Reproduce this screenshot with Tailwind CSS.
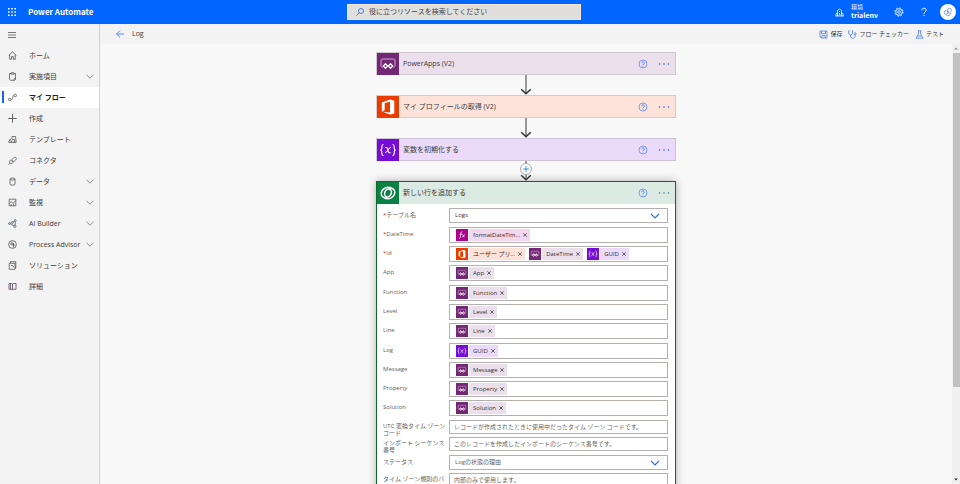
<!DOCTYPE html>
<html lang="ja">
<head>
<meta charset="utf-8">
<meta name="viewport" content="width=device-width, initial-scale=1">
<title>Power Automate - Log</title>
<script src="https://cdn.jsdelivr.net/npm/@tailwindcss/browser@4"></script>
</head>
<body class="flex h-screen flex-col overflow-hidden bg-[#f8f8f8] font-['Open_Sans','Noto_Sans_CJK_JP',sans-serif] text-[7px] leading-[10px] text-[#3b3a39]">

<svg class="hidden" aria-hidden="true">
  <symbol id="help" viewBox="0 0 10 10"><circle cx="5" cy="5" r="4" fill="none" stroke="#6f94f2" stroke-width=".9"/><path d="M3.7 4.1a1.3 1.3 0 1 1 2 1.100c-.5.3-.7.5-.7 1M5 6.900v.7" fill="none" stroke="#4f7bec" stroke-width=".9"/></symbol>
  <symbol id="dots" viewBox="0 0 12 4"><circle cx="1.500" cy="2" r=".8"/><circle cx="6" cy="2" r=".8"/><circle cx="10.500" cy="2" r=".8"/></symbol>
  <symbol id="chev" viewBox="0 0 8 5"><path d="M.5.8L4 4.200 7.500.8" fill="none" stroke="#777" stroke-width=".8"/></symbol>
  <symbol id="arrow" viewBox="0 0 12 20"><path d="M6 0v18" stroke="#979797" stroke-width="2"/><path d="M1.200 14.300L6 18.800l4.800-4.500" fill="none" stroke="#333" stroke-width="1.500"/></symbol>
  <symbol id="apps" viewBox="0 0 22 22"><rect width="22" height="22" fill="#742774"/><path d="M6.200 14H5.500a1.500 1.500 0 0 1-1.500-1.500V7.500A1.500 1.500 0 0 1 5.500 6h11A1.500 1.500 0 0 1 18 7.500v5a1.500 1.500 0 0 1-1.500 1.500h-.8" fill="none" stroke="#d9b8d9" stroke-width=".9"/><path d="M8.500 9.800l2.900 3.200-2.900 3.200L5.600 13z" fill="#fff"/><path d="M13.500 9.800l2.900 3.200-2.900 3.200-2.900-3.200z" fill="#fff"/><circle cx="8.500" cy="13" r="1" fill="#742774"/><circle cx="13.500" cy="13" r="1" fill="#742774"/></symbol>
  <symbol id="office" viewBox="0 0 22 22"><rect width="22" height="22" fill="#eb3c00"/><path d="M4.800 6.600L13 3.500l4.300 1.300v12.600L13 18.600l-8.200-3.100 8.200 1V5.800L7.700 7.100v7L4.800 15.500z" fill="#fff"/></symbol>
  <symbol id="var" viewBox="0 0 22 22"><rect width="22" height="22" fill="#770bd6"/><g fill="none" stroke="#fff" stroke-width="1.100"><path d="M6.500 5.500c-1.600 0-1.700.7-1.700 2v1.700c0 1.200-.4 1.800-1.600 1.800 1.200 0 1.600.6 1.600 1.800v1.700c0 1.300.1 2 1.700 2M15.500 5.500c1.600 0 1.700.7 1.700 2v1.700c0 1.200.4 1.800 1.600 1.800-1.200 0-1.600.6-1.600 1.800v1.700c0 1.300-.1 2-1.700 2"/><path d="M8.300 8.700c1.300-.6 2 0 2.400 1.600l.7 2.400c.4 1.200 1 1.500 2.200.8M14 8.500c-1.200-.3-1.800.6-2.900 2.400-1 1.700-1.700 3-3.100 2.600"/></g></symbol>
  <symbol id="fx" viewBox="0 0 22 22"><rect width="22" height="22" fill="#ad008c"/><path d="M12 5.200c-1.700-.8-2.500.3-2.900 2.300L8 14.500c-.4 2-1.200 2.900-2.700 2.200M6.500 9.500h4.800M11.500 10.500c1.200-.5 1.600.2 1.900 1.500l.5 2c.3 1 .8 1.200 1.700.6M16.300 10.400c-1-.2-1.500.6-2.500 2-.9 1.400-1.500 2.400-2.600 2" fill="none" stroke="#fff" stroke-width="1.300"/></symbol>
  <symbol id="dv" viewBox="0 0 22 22"><rect width="22" height="22" fill="#088142"/><g fill="none" stroke="#fff" stroke-width="1.500"><path d="M14.500 5.600C9.500 4 4.200 7.500 4.200 11.800c0 3.100 3.300 4.900 6.300 3.600"/><path d="M7.500 16.400c5 1.600 10.300-1.900 10.300-6.200 0-3.100-3.300-4.900-6.300-3.600"/><ellipse cx="11" cy="11" rx="3.200" ry="4.100" transform="rotate(25 11 11)"/></g></symbol>
</svg>

<header class="flex h-6 shrink-0 items-center bg-[#0066ff] text-white">
  <div class="flex w-[36.15%] shrink-0 items-center gap-3 pl-2">
    <button aria-label="アプリ起動ツール" class="size-2"><svg viewBox="0 0 8 8" class="size-2" fill="#fff"><path d="M0 0h1.600v1.600H0zM3.200 0h1.600v1.600H3.200zM6.400 0H8v1.600H6.400zM0 3.200h1.600v1.600H0zM3.200 3.200h1.600v1.600H3.200zM6.400 3.200H8v1.600H6.400zM0 6.400h1.600V8H0zM3.200 6.400h1.600V8H3.200zM6.400 6.400H8V8H6.400z"/></svg></button>
    <a href="#" class="font-['Noto_Sans_CJK_JP',sans-serif] text-[8px] font-bold">Power Automate</a>
  </div>
  <label class="flex h-4 w-[24.4%] shrink-0 items-center gap-[5px] border border-[#f3e3cf] bg-[#e1dfdd] pl-2">
    <svg viewBox="0 0 8 8" class="size-2 shrink-0" fill="none" stroke="#3f74d8" stroke-width=".9"><circle cx="5" cy="3" r="2.500"/><path d="M3.200 4.800L.4 7.600"/></svg>
    <input type="search" aria-label="検索" placeholder="役に立つリソースを検索してください" class="min-w-0 flex-1 bg-transparent text-[#323130] outline-none placeholder:text-[#444]">
  </label>
  <div class="flex flex-1 items-center justify-end pr-1">
    <button class="mr-4 flex items-center gap-[7px] text-left">
      <svg viewBox="0 0 9 9" class="size-[9px]" fill="none" stroke="#fff" stroke-width=".8"><path d="M.3 8h8.400M1 8V5.500h1.500M8 8V5.500H6.500M2.500 8V2.500L4.500 1l2 1.500V8M4.500 3v1M4.500 5v1M3.500 6.800h2"/></svg>
      <span class="flex flex-col"><span class="text-[6px] leading-[7px]">環境</span><span class="font-['Noto_Sans_CJK_JP',sans-serif] text-[7px] font-bold leading-[9px]">trialenv</span></span>
    </button>
    <button aria-label="設定" class="mr-4"><svg viewBox="0 0 10 10" class="size-2.5" fill="none" stroke="#fff"><circle cx="5" cy="5" r="3.300" stroke-width=".8"/><circle cx="5" cy="5" r="4.100" stroke-width=".9" stroke-dasharray="1.600 1.620"/><circle cx="5" cy="5" r="1.400" stroke-width=".8"/></svg></button>
    <button aria-label="ヘルプ" class="mr-3"><svg viewBox="0 0 8 10" class="h-2.5 w-2" fill="none" stroke="#fff" stroke-width="1"><path d="M1.800 3.300C1.800.6 6.200.6 6.200 3.200 6.200 4.800 4 4.900 4 6.700M4 7.800V9"/></svg></button>
    <button aria-label="アカウント" class="flex size-4 items-center justify-center rounded-full bg-white"><svg viewBox="0 0 10 10" class="size-2.5" fill="none" stroke="#6f8fc4" stroke-width=".8"><circle cx="3" cy="5.500" r="1.900"/><circle cx="6.500" cy="3.300" r="1.900"/><path d="M3.500 8.500c1.500.7 4-.4 4.500-2.500M4.500 5.500l1.800 1"/></svg></button>
  </div>
</header>

<div class="flex min-h-0 flex-1">
  <nav aria-label="メイン" class="w-[100px] shrink-0 border-r border-[#d2d0ce] bg-[#f3f3f3] [&_a]:flex [&_a]:h-[21px] [&_a]:items-center [&_a]:pl-2 [&_a]:pr-[5px] [&_span]:ml-3 [&_span]:flex-1 [&_span]:whitespace-nowrap [&_svg]:shrink-0">
    <button aria-label="メニュー" class="flex h-[21px] items-center pl-2"><svg viewBox="0 0 8 8" class="size-2" stroke="#666" stroke-width=".9"><path d="M0 1.500h8M0 4h8M0 6.500h8"/></svg></button>
    <a href="#"><svg viewBox="0 0 9 9" class="size-[9px]" fill="none" stroke="#555" stroke-width=".8"><path d="M.7 4.500l3.800-3.700 3.800 3.700M1.700 3.700v4.600h1.900V5.600h1.800v2.700h1.900V3.700"/></svg><span>ホーム</span></a>
    <a href="#"><svg viewBox="0 0 9 9" class="size-[9px]" fill="none" stroke="#555" stroke-width=".8"><path d="M3 1.500H1.500v5.800l.8 1h4.400l.8-.9V1.500H6M3 .8h3v1.400H3zM6 8.200V6.800h1.400"/></svg><span>実施項目</span><svg class="h-[5px] w-2"><use href="#chev"/></svg></a>
    <a href="#" aria-current="page" class="relative bg-white font-bold text-[#222]"><i class="absolute left-0.5 top-1 h-3 w-0.5 bg-[#1663f0]"></i><svg viewBox="0 0 9 9" class="size-[9px]" fill="none" stroke="#555" stroke-width=".8"><circle cx="1.800" cy="6.500" r="1.300"/><circle cx="7.200" cy="2.500" r="1.300"/><path d="M3.100 6.500h.7c.9 0 .7-.8.9-2 .1-1.100.2-2 1.200-2"/></svg><span>マイ フロー</span></a>
    <a href="#"><svg viewBox="0 0 9 9" class="size-[9px]" stroke="#555" stroke-width=".9"><path d="M4.500.3v8.400M.3 4.500h8.400"/></svg><span>作成</span></a>
    <a href="#"><svg viewBox="0 0 9 9" class="size-[9px]" fill="none" stroke="#555" stroke-width=".8"><path d="M4 4V1.500h3.500l.7 5.800H5.500M4 4.500h2.500v2.800H2.800M2.200 4.200L.6 7.300h3.200z"/></svg><span>テンプレート</span></a>
    <a href="#"><svg viewBox="0 0 9 9" class="size-[9px]" fill="none" stroke="#555" stroke-width=".8"><path d="M.5 8.500l1.400-1.400M1.900 7.100c-1-1.500-.3-2.300.7-3.200l2.500 2.500c-1 1-1.900 1.500-3.200.7zM3.800 3.600l1.600-1.600c1-.9 1.800-.9 2.500-.4.600.8.500 1.600-.4 2.600L5.800 5.800z"/></svg><span>コネクタ</span></a>
    <a href="#"><svg viewBox="0 0 9 9" class="size-[9px]" fill="none" stroke="#555" stroke-width=".8"><ellipse cx="4.500" cy="2" rx="2.500" ry="1"/><path d="M2 2v5.200c0 1.200 5 1.200 5 0V2"/></svg><span>データ</span><svg class="h-[5px] w-2"><use href="#chev"/></svg></a>
    <a href="#"><svg viewBox="0 0 9 9" class="size-[9px]" fill="none" stroke="#555" stroke-width=".8"><path d="M1.200 1.200h6.600v6.600H1.200zM1.200 5.500l2-2 1.800 2 2.800-3M3.200 6v1.800M5.500 6v1.800"/></svg><span>監視</span><svg class="h-[5px] w-2"><use href="#chev"/></svg></a>
    <a href="#"><svg viewBox="0 0 9 9" class="size-[9px]" fill="none" stroke="#4a5a70" stroke-width=".8"><circle cx="1.400" cy="4.500" r=".9"/><circle cx="7.300" cy="1.500" r=".9"/><circle cx="4.400" cy="3.500" r=".9"/><circle cx="6.800" cy="7.300" r="1.100"/><path d="M2.300 4.300l1.200-.5M5.200 3l1.400-1M2.200 5l3.600 1.800M7.200 2.400v3.800"/></svg><span>AI Builder</span><svg class="h-[5px] w-2"><use href="#chev"/></svg></a>
    <a href="#"><svg viewBox="0 0 9 9" class="size-[9px]" fill="none" stroke="#555" stroke-width=".8"><circle cx="4.500" cy="4.500" r="3.900"/><path d="M4 1.500v4M2 4h2.500M4.500 5h2.800M5.500 3v4.500"/></svg><span>Process Advisor</span><svg class="h-[5px] w-2"><use href="#chev"/></svg></a>
    <a href="#"><svg viewBox="0 0 9 9" class="size-[9px]" fill="none" stroke="#555" stroke-width=".8"><path d="M2.500 2V.7h5.300v6.500H7M1.200 2.300H7v6H1.200zM3 4.500h1.500l1.500 2"/></svg><span>ソリューション</span></a>
    <a href="#"><svg viewBox="0 0 9 9" class="size-[9px]" fill="none" stroke="#5a4565" stroke-width=".8"><path d="M1 1.500h2.600l.9.500.9-.5H8v5.800H5.400l-.9.500-.9-.5H1zM4.500 2v5.500M2.500 1.500v5.800"/></svg><span>詳細</span></a>
  </nav>

  <div class="flex min-w-0 flex-1 flex-col">
    <div class="flex h-5 shrink-0 items-center justify-between bg-[#f3f3f3] pl-4 pr-4">
      <div class="flex items-center gap-2">
        <button aria-label="戻る"><svg viewBox="0 0 8 8" class="size-2" fill="none" stroke="#5b86f5" stroke-width="1"><path d="M8 4H.8M4 .6L.6 4 4 7.400"/></svg></button>
        <h1>Log</h1>
      </div>
      <div class="flex items-center gap-1.5 text-[6px] [&_button]:flex [&_button]:items-center [&_button]:gap-0.5 [&_button]:whitespace-nowrap">
        <button><svg viewBox="0 0 9 9" class="size-[9px]" fill="none" stroke="#4a80dd" stroke-width=".8"><path d="M1 1h7v7H2L1 7zM2.500 1v2.700h4V1M2.800 8V5.700h3.500V8"/></svg>保存</button>
        <button><svg viewBox="0 0 9 9" class="size-[9px]" fill="none" stroke="#4a80dd" stroke-width=".8"><path d="M1.500.8H.6V3c0 2.500 4 2.500 4 0V.8h-.9M2.600 4.800v1.500c0 2.500 4.600 2.500 4.600 0V4.800"/><circle cx="7.200" cy="3.800" r="1"/></svg>フロー チェッカー</button>
        <button><svg viewBox="0 0 9 9" class="size-[9px]" fill="none" stroke="#4a80dd" stroke-width=".8"><path d="M2.800.8h3.400M3.500.8v3L1 8.200h7L5.500 3.800v-3M2.300 6h4.400"/></svg>テスト</button>
      </div>
    </div>

    <div class="flex min-h-0 flex-1">
      <main class="flex min-w-0 flex-1 flex-col items-center overflow-hidden pt-2 [&>*]:shrink-0">
        <section class="flex h-[23px] w-[300px] items-center border border-[#d0c8d0] bg-[#ecdfec]">
          <svg class="size-[22px]"><use href="#apps"/></svg>
          <h2 class="flex-1 pl-1">PowerApps (V2)</h2>
          <button aria-label="ヘルプ"><svg class="size-2.5"><use href="#help"/></svg></button>
          <button aria-label="メニュー" class="ml-2.5 mr-[5px]"><svg class="h-1 w-3" fill="#2563d8"><use href="#dots"/></svg></button>
        </section>
        <svg class="h-5 w-3"><use href="#arrow"/></svg>
        <section class="flex h-[23px] w-[300px] items-center border border-[#d8cac6] bg-[#fde2d9]">
          <svg class="size-[22px]"><use href="#office"/></svg>
          <h2 class="flex-1 pl-1">マイ プロフィールの取得 (V2)</h2>
          <button aria-label="ヘルプ"><svg class="size-2.5"><use href="#help"/></svg></button>
          <button aria-label="メニュー" class="ml-2.5 mr-[5px]"><svg class="h-1 w-3" fill="#2563d8"><use href="#dots"/></svg></button>
        </section>
        <svg class="h-5 w-3"><use href="#arrow"/></svg>
        <section class="flex h-[23px] w-[300px] items-center border border-[#cdc4d8] bg-[#ebdaf9]">
          <svg class="size-[22px]"><use href="#var"/></svg>
          <h2 class="flex-1 pl-1">変数を初期化する</h2>
          <button aria-label="ヘルプ"><svg class="size-2.5"><use href="#help"/></svg></button>
          <button aria-label="メニュー" class="ml-2.5 mr-[5px]"><svg class="h-1 w-3" fill="#2563d8"><use href="#dots"/></svg></button>
        </section>
        <div class="relative h-5">
          <svg class="h-5 w-3"><use href="#arrow"/></svg>
          <button aria-label="新しいステップを挿入" class="absolute left-0 top-0.5 flex size-3 items-center justify-center rounded-full border border-[#aaa] bg-white"><svg viewBox="0 0 6 6" class="size-1.5" stroke="#2b88d8" stroke-width=".9"><path d="M3 0v6M0 3h6"/></svg></button>
        </div>

        <section class="w-[300px] border border-[#0b6a24] bg-white pb-3 shadow-[0_0_8px_rgba(0,0,0,0.3)]">
          <div class="flex h-[22px] items-center bg-[#dbebe3]">
            <svg class="size-[22px]"><use href="#dv"/></svg>
            <h2 class="flex-1 pl-1">新しい行を追加する</h2>
            <button aria-label="ヘルプ"><svg class="size-2.5"><use href="#help"/></svg></button>
            <button aria-label="メニュー" class="ml-2.5 mr-[5px]"><svg class="h-1 w-3" fill="#2b7f9e"><use href="#dots"/></svg></button>
          </div>
          <form id="fields" class="flex flex-col gap-1 py-1 pl-1.5 pr-[7px] text-[6px] leading-[7px] text-[#605e5c]"></form>
        </section>
      </main>
      <div aria-hidden="true" class="flex w-2 shrink-0 flex-col items-center bg-[#f0f0f0]">
        <svg viewBox="0 0 8 9" class="h-[9px] w-2"><path d="M2.200 5.500L4 3.500l1.800 2z" fill="#888"/></svg>
        <div class="h-[76%] w-[7px] bg-[#c1c1c1]"></div>
        <svg viewBox="0 0 8 9" class="mt-auto h-[9px] w-2"><path d="M2.200 3.500L4 5.500l1.800-2z" fill="#222"/></svg>
      </div>
    </div>
  </div>
</div>

<script>
const tint = { apps: 'bg-[#ecdfec]', office: 'bg-[#fde2d9]', var: 'bg-[#ebdaf9]', fx: 'bg-[#f3d7ee]' };
const groups = [
  [
    { label: 'テーブル名', required: true, select: 'Logs', dark: true },
    { label: 'DateTime', required: true, chips: [['fx', 'formatDateTim...']] },
    { label: 'Id', required: true, chips: [['office', 'ユーザー プリ...'], ['apps', 'DateTime'], ['var', 'GUID']] },
    { label: 'App', chips: [['apps', 'App']] },
  ],
  [
    { label: 'Function', chips: [['apps', 'Function']] },
    { label: 'Level', chips: [['apps', 'Level']] },
    { label: 'Line', chips: [['apps', 'Line']] },
  ],
  [
    { label: 'Log', chips: [['var', 'GUID']] },
    { label: 'Message', chips: [['apps', 'Message']] },
    { label: 'Property', chips: [['apps', 'Property']] },
    { label: 'Solution', chips: [['apps', 'Solution']] },
  ],
  [
    { label: 'UTC 変換タイム ゾーン コード', hint: 'レコードが作成されたときに使用中だったタイム ゾーン コードです。' },
    { label: 'インポート シーケンス番号', hint: 'このレコードを作成したインポートのシーケンス番号です。' },
  ],
  [
    { label: 'ステータス', select: 'Logの状態の理由' },
    { label: 'タイム ゾーン規則のバ', hint: '内部のみで使用します。' },
  ],
];
let n = 0;
function control(f, id) {
  if (f.select) return `<div class="relative flex-1"><select id="${id}" class="block h-[15px] w-full appearance-none border border-[#b3b0ad] bg-white pl-[5px] ${f.dark ? 'text-[#323130]' : ''}"><option>${f.select}</option></select><svg viewBox="0 0 10 6" class="pointer-events-none absolute right-2 top-[5px] h-1.5 w-2.5" fill="none" stroke="#2b6de0" stroke-width="1.100"><path d="M1 1l4 4 4-4"/></svg></div>`;
  if (f.hint) return `<input id="${id}" type="text" placeholder="${f.hint}" class="h-[14px] min-w-0 flex-1 border border-[#b3b0ad] bg-white pl-1 outline-none placeholder:text-[#666]">`;
  const chips = f.chips.map(([icon, text]) => `<span class="flex h-3 shrink-0 items-center gap-px whitespace-nowrap text-[#323130]"><svg class="size-3"><use href="#${icon}"/></svg><span class="flex h-3 items-center gap-[3px] pl-1 pr-[3px] ${tint[icon]}">${text}<button type="button" aria-label="${text} を削除"><svg viewBox="0 0 4 4" class="size-1" stroke="#444" stroke-width=".8"><path d="M.3.3l3.400 3.400M3.700.3L.3 3.700"/></svg></button></span></span>`).join('');
  return `<div class="flex h-4 min-w-0 flex-1 items-center gap-1 border border-[#b3b0ad] bg-white pl-1.5">${chips}<input id="${id}" type="text" class="min-w-0 flex-1 outline-none"></div>`;
}
document.getElementById('fields').innerHTML = groups.map(g => `<div class="flex flex-col gap-[3px]">${g.map(f => {
  const id = 'field' + (++n);
  const row = f.chips || f.required ? 'h-4' : f.select ? 'h-[15px]' : 'h-[14px]';
  return `<div class="flex items-start ${row}"><label for="${id}" class="w-[66px] shrink-0 pr-0.5 ${f.chips || f.select ? 'pt-1' : 'pt-[3px]'}">${f.required ? '<b class="font-normal text-[#d13438]">*</b>' : ''}${f.label}</label>${control(f, id)}</div>`;
}).join('')}</div>`).join('');
</script>
</body>
</html>
